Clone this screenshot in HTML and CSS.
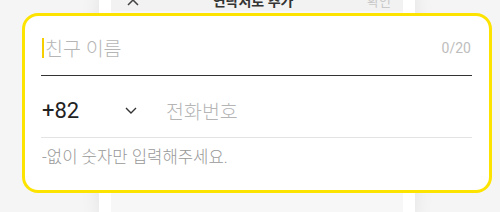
FILE: index.html
```html
<!DOCTYPE html>
<html lang="ko">
<head>
  <meta charset="UTF-8">
  <meta name="viewport" content="width=device-width, initial-scale=1.0">
  <title>연락처로 추가</title>
  <link rel="stylesheet" href="styles.css">
</head>
<body>
  <!-- 뒤쪽 휴대폰 화면 -->
  <div class="phone">
    <div class="phone-inner">
      <div class="phone-header">
        <span class="close">
          <svg width="12" height="12" viewBox="0 0 12 12"><path d="M1 1 L11 11 M11 1 L1 11" stroke="#444" stroke-width="1.5" fill="none"/></svg>
        </span>
        <span class="title">연락처로 추가</span>
        <span class="confirm">확인</span>
      </div>
    </div>
  </div>

  <!-- 강조된 입력 카드 -->
  <div class="card">
    <div class="name-field">
      <span class="caret"></span>
      <span class="placeholder">친구 이름</span>
      <span class="counter">0/20</span>
    </div>
    <div class="phone-field">
      <span class="country">+82</span>
      <svg class="chevron" width="12" height="7" viewBox="0 0 12 7"><path d="M1 1 L6 6 L11 1" stroke="#333" stroke-width="1.4" fill="none"/></svg>
      <span class="placeholder">전화번호</span>
    </div>
    <p class="helper">-없이 숫자만 입력해주세요.</p>
  </div>
</body>
</html>
```

FILE: styles.css
```css
/* 기본 */
* { box-sizing: border-box; margin: 0; padding: 0; }
html, body { height: 212px; overflow: hidden; }
body {
  font-family: Roboto, "Noto Sans CJK KR", sans-serif;
  background: #f5f5f5; color: #222;
  position: relative;
}

/* 뒤쪽 휴대폰 */
.phone {
  margin: -11px 0 0 99px; width: 316px; height: 230px;
  background: #fff; padding: 0 12px;
  box-shadow: 0 0 18px rgba(0,0,0,0.08);
}
.phone-inner { background: #f7f7f7; height: 100%; }
.phone-header {
  height: 22px; background: #f2f2f2;
  display: flex; align-items: center; justify-content: space-between;
  padding: 0 12px 0 16px;
  font-size: 14px;
}
.phone-header .close { display: flex; }
.phone-header .title { font-weight: bold; color: #333; }
.phone-header .confirm { color: #c8c8c8; font-size: 13px; }

/* 입력 카드 */
.card {
  position: absolute; left: 22px; top: 13px;
  width: 470px; height: 180px;
  background: #fff; border: 3px solid #fde300; border-radius: 16px;
  padding: 0 17px 0 16px;
}
.name-field {
  height: 60px; padding-top: 4px;
  display: flex; align-items: center;
  border-bottom: 1.5px solid #333;
}
.caret { width: 2px; height: 20px; background: #f5cf00; margin: 0 1px 0 1px; }
.placeholder { font-size: 19.5px; font-weight: 300; color: #b5b5b5; }
.counter { margin-left: auto; font-size: 14px; color: #bdbdbd; padding-right: 1px; }

.phone-field {
  display: flex; align-items: center;
  height: 62px; padding-top: 8px;
  border-bottom: 1px solid #e4e4e4;
}
.country { width: 84px; padding-left: 1px; font-size: 22px; color: #222; }
.chevron { margin-right: 29px; }

.helper { margin-top: 9px; padding-left: 1px; font-size: 16.7px; font-weight: 300; line-height: 22px; color: #999; }
```
